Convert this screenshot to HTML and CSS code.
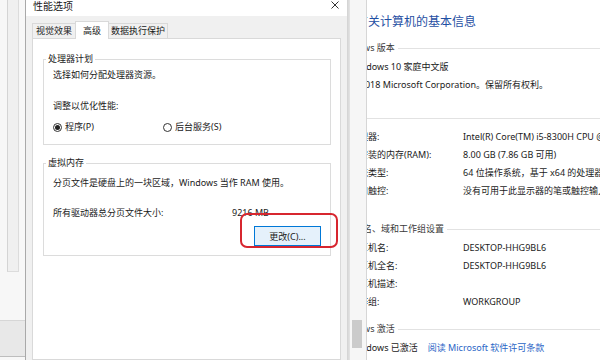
FILE: index.html
```html
<!DOCTYPE html>
<html lang="zh-CN">
<head>
  <meta charset="UTF-8" />
  <title>性能选项</title>
  <link rel="stylesheet" href="styles.css">
</head>
<body>

<div class="desk">
  <div class="behind">
    <div class="behind-list"></div>
    <div class="behind-foot"></div>
  </div>

  <div class="dialog">
    <div class="titlebar">
      <span class="title">性能选项</span>
      <svg class="close" width="8" height="8" viewBox="0 0 8 8">
        <path d="M0.5 0.5L7.5 7.5M7.5 0.5L0.5 7.5" stroke="#333" stroke-width="1" fill="none" />
      </svg>
    </div>

    <div class="dialog-body">
      <div class="tabs">
        <div class="tab">视觉效果</div>
        <div class="tab active">高级</div>
        <div class="tab">数据执行保护</div>
      </div>

      <div class="panel">
        <fieldset class="group">
          <legend>处理器计划</legend>
          <p>选择如何分配处理器资源。</p>
          <p class="spaced">调整以优化性能:</p>
          <div class="radio-row">
            <label class="radio checked"><span class="dot"></span>程序(P)</label>
            <label class="radio"><span class="dot"></span>后台服务(S)</label>
          </div>
        </fieldset>

        <fieldset class="group group-vm">
          <legend>虚拟内存</legend>
          <p class="intro">分页文件是硬盘上的一块区域，Windows 当作 RAM 使用。</p>
          <div class="size-row">
            <span class="size-label">所有驱动器总分页文件大小:</span>
            <span>9216 MB</span>
          </div>
          <div class="btn-row">
            <button>更改(C)...</button>
          </div>
        </fieldset>

        <div class="mark"></div>
      </div>
    </div>
  </div>

  <div class="edge">
    <div class="edge-block"></div>
  </div>

  <div class="sysinfo">
    <div class="sys-inner">
      <h1>有关计算机的基本信息</h1>

      <div class="sec">
        <div class="sec-head">Windows 版本</div>
        <div class="row">Windows 10 家庭中文版</div>
        <div class="row">© 2018 Microsoft Corporation。保留所有权利。</div>
      </div>

      <div class="sec sec-system">
        <div class="sec-head">系统</div>
        <div class="row"><span class="key">处理器:</span><span>Intel(R) Core(TM) i5-8300H CPU @ 2.30GHz</span></div>
        <div class="row"><span class="key">已安装的内存(RAM):</span><span>8.00 GB (7.86 GB 可用)</span></div>
        <div class="row"><span class="key">系统类型:</span><span>64 位操作系统，基于 x64 的处理器</span></div>
        <div class="row"><span class="key">笔和触控:</span><span>没有可用于此显示器的笔或触控输入</span></div>
      </div>

      <div class="sec sec-name">
        <div class="sec-head">计算机名、域和工作组设置</div>
        <div class="row"><span class="key">计算机名:</span><span>DESKTOP-HHG9BL6</span></div>
        <div class="row"><span class="key">计算机全名:</span><span>DESKTOP-HHG9BL6</span></div>
        <div class="row"><span class="key">计算机描述:</span><span></span></div>
        <div class="row"><span class="key">工作组:</span><span>WORKGROUP</span></div>
      </div>

      <div class="sec sec-act">
        <div class="sec-head">Windows 激活</div>
        <div class="row">Windows 已激活<a class="link">阅读 Microsoft 软件许可条款</a></div>
      </div>
    </div>
  </div>
</div>

</body>
</html>
```

FILE: styles.css
```css
* { box-sizing: border-box; }

body {
  margin: 0;
  font-family: "Noto Sans", "Noto Sans CJK SC", sans-serif;
  font-size: 9px;
  color: #1a1a1a;
  background: #fff;
  overflow: hidden;
}

.desk {
  display: flex;
  width: 600px;
  height: 360px;
}

/* window behind the dialog, left edge */
.behind {
  width: 25px;
  display: flex;
  flex-direction: column;
  background: #f7f7f7;
}

.behind-list {
  height: 272px;
  margin-left: 7px;
  width: 12px;
  background: #f0f0f0;
  border-left: 1px solid #d4d4d4;
  border-right: 1px solid #dcdcdc;
  border-bottom: 1px solid #dcdcdc;
}

.behind-foot {
  margin-top: 48px;
  height: 37px;
  background: #e8e8e8;
  border-top: 1px solid #d6d6d6;
  border-bottom: 1px solid #bdbdbd;
}

/* performance options dialog */
.dialog {
  width: 322px;
  display: flex;
  flex-direction: column;
  border-left: 1px solid #a9a9a9;
  background: #f0f0f0;
}

.titlebar {
  height: 16px;
  display: flex;
  justify-content: space-between;
  align-items: flex-start;
  padding: 0 8px 0 7px;
  background: #fff;
}

.title {
  font-size: 10px;
  line-height: 12px;
}

.close {
  margin-top: 1px;
}

.dialog-body {
  flex: 1;
  display: flex;
  flex-direction: column;
  padding: 0 6px;
}

.tabs {
  height: 22px;
  display: flex;
  align-items: flex-end;
}

.tab {
  height: 15px;
  line-height: 14px;
  padding: 0 3px;
  border: 1px solid #d9d9d9;
  border-bottom: none;
  background: #f0f0f0;
  white-space: nowrap;
}

.tab + .tab { margin-left: -1px; }

.tab.active {
  height: 18px;
  line-height: 17px;
  padding: 0 7px;
  margin-bottom: -1px;
  background: #fff;
  position: relative;
  z-index: 1;
}

.tab:last-child { padding: 0 2px; }

.panel {
  flex: 1;
  position: relative;
  background: #fff;
  border: 1px solid #d9d9d9;
  padding: 12px 9px 0 10px;
}

.group {
  margin: 0;
  min-width: 0;
  border: 1px solid #dcdcdc;
  padding: 0 9px 9px 9px;
}

.group legend {
  line-height: 16px;
  padding: 0 2px;
  margin-left: -7px;
}

.group p {
  margin: 0;
  line-height: 16px;
  white-space: nowrap;
}

.group p.spaced { margin-top: 15px; }

.radio-row {
  display: flex;
  margin-top: 5px;
  line-height: 16px;
}

.radio {
  display: flex;
  align-items: center;
  gap: 3px;
}

.radio:first-child { width: 110px; }

.dot {
  width: 9px;
  height: 9px;
  border: 1px solid #333;
  border-radius: 50%;
  display: flex;
  align-items: center;
  justify-content: center;
}

.radio.checked .dot::after {
  content: "";
  width: 5px;
  height: 5px;
  border-radius: 50%;
  background: #222;
}

.group-vm { margin-top: 10px; }

.group-vm p.intro { margin-top: 4px; }

.size-row {
  display: flex;
  margin-top: 14px;
  line-height: 16px;
  white-space: nowrap;
}

.size-label { width: 179px; }

.btn-row {
  display: flex;
  justify-content: flex-end;
  margin-top: 5px;
}

button {
  width: 67px;
  height: 20px;
  padding: 0;
  font-family: inherit;
  font-size: 9px;
  color: #1a1a1a;
  background: #e5f1fb;
  border: 1px solid #0078d7;
}

/* red annotation around the change button */
.mark {
  position: absolute;
  left: 207px;
  top: 174px;
  width: 98px;
  height: 35px;
  border: 2px solid #d7262f;
  border-radius: 7px;
}

/* strip between dialog and system window */
.edge {
  width: 20px;
  display: flex;
  flex-direction: column;
  justify-content: flex-end;
  padding: 0 0 12px 5px;
  background: linear-gradient(to right, #d2d2d2 0, #e4e4e4 3px, #f6f6f6 3px, #f6f6f6 19px, #d6d6d6 19px);
}

.edge-block {
  width: 10px;
  height: 28px;
  background: #cbcbcb;
}

/* system window */
.sysinfo {
  flex: 1;
  overflow: hidden;
  background: #fff;
}

.sys-inner {
  margin-left: -17px;
  padding-top: 12px;
  white-space: nowrap;
}

.sys-inner h1 {
  margin: 0 0 7px 6px;
  font-size: 12px;
  font-weight: normal;
  line-height: 20px;
  color: #1f4fa3;
}

.sec-head {
  display: flex;
  align-items: center;
  margin-left: -14px;
  margin-bottom: 1px;
  line-height: 18px;
  color: #3a3a3a;
}

.sec-head::after {
  content: "";
  flex: 1;
  margin-left: 3px;
  border-top: 1px solid #e2e2e2;
}

.row {
  display: flex;
  line-height: 18px;
}

.key {
  width: 113px;
  flex-shrink: 0;
}

.sec-system { margin-top: 15px; }
.sec-name { margin-top: 20px; }
.sec-act { margin-top: 9px; }

.link {
  margin-left: 10px;
  color: #2a65c6;
}
```
